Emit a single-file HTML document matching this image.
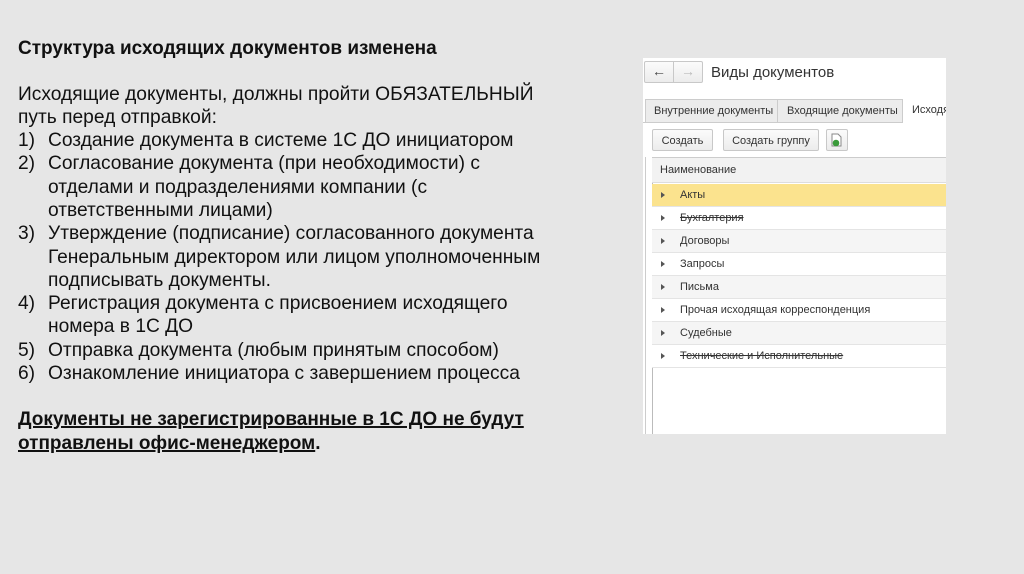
<!DOCTYPE html>
<html><head><meta charset="utf-8"><style>
*{margin:0;padding:0;box-sizing:border-box}
body{width:1024px;height:574px;background:#e6e6e6;position:relative;overflow:hidden;font-family:"Liberation Sans",Arial,sans-serif;color:#111}
.l{position:absolute;font-size:19.2px;white-space:nowrap;line-height:22px}
.n{left:18px}.t{left:48px}
.b{font-weight:bold}
.u{text-decoration:underline;text-decoration-thickness:2px}
#p{position:absolute;left:643px;top:58px;width:303px;height:376px;background:#fff;overflow:hidden;font-size:11px;color:#333}
.a{position:absolute}
.btn{position:absolute;border:1px solid #c8c8c8;background:linear-gradient(#fbfbfb,#ececec);border-radius:2px;font-size:11px;text-align:center;line-height:22px;color:#333}
.row{position:absolute;left:9px;width:300px;height:23px;border-bottom:1px solid #e4e4e4;line-height:22px}
.row i{position:absolute;left:9px;top:8px;width:0;height:0;border-left:4px solid #555;border-top:3px solid transparent;border-bottom:3px solid transparent}
.row span{position:absolute;left:28px}
.s{text-decoration:line-through}
</style></head><body>
<div class="l b" style="left:18px;top:38px;font-size:19px">Структура исходящих документов изменена</div>
<div class="l" style="left:18px;top:84px">Исходящие документы, должны пройти ОБЯЗАТЕЛЬНЫЙ</div>
<div class="l" style="left:18px;top:107px">путь перед отправкой:</div>
<div class="l n" style="top:130px">1)</div><div class="l t" style="top:130px">Создание документа в системе 1С ДО инициатором</div>
<div class="l n" style="top:153px">2)</div><div class="l t" style="top:153px">Согласование документа (при необходимости) с</div>
<div class="l t" style="top:177px">отделами и подразделениями компании (с</div>
<div class="l t" style="top:200px">ответственными лицами)</div>
<div class="l n" style="top:223px">3)</div><div class="l t" style="top:223px">Утверждение (подписание) согласованного документа</div>
<div class="l t" style="top:247px">Генеральным директором или лицом уполномоченным</div>
<div class="l t" style="top:270px">подписывать документы.</div>
<div class="l n" style="top:293px">4)</div><div class="l t" style="top:293px">Регистрация документа с присвоением исходящего</div>
<div class="l t" style="top:316px">номера в 1С ДО</div>
<div class="l n" style="top:340px">5)</div><div class="l t" style="top:340px">Отправка документа (любым принятым способом)</div>
<div class="l n" style="top:363px">6)</div><div class="l t" style="top:363px">Ознакомление инициатора с завершением процесса</div>
<div class="l b" style="left:18px;top:409px;font-size:19px"><span class="u">Документы не зарегистрированные в 1С ДО не будут</span></div>
<div class="l b" style="left:18px;top:433px;font-size:19px"><span class="u">отправлены офис-менеджером</span>.</div>

<div id="p">
 <div class="btn" style="left:1px;top:3px;width:30px;height:22px;border-radius:2px 0 0 2px;font-size:14px;line-height:18px;color:#444">&#8592;</div>
 <div class="btn" style="left:30px;top:3px;width:30px;height:22px;border-radius:0 2px 2px 0;font-size:14px;line-height:18px;color:#bbb">&#8594;</div>
 <div class="a" style="left:68px;top:6px;font-size:15px;color:#333">Виды документов</div>
 <div class="a" style="left:0;top:41px;width:303px;height:24px;border-bottom:1px solid #ccc"></div>
 <div class="a" style="left:2px;top:41px;width:133px;height:24px;background:#ececec;border:1px solid #ccc;line-height:22px;padding-left:8px">Внутренние документы</div>
 <div class="a" style="left:135px;top:41px;width:125px;height:24px;background:#ececec;border:1px solid #ccc;border-left:none;line-height:22px;padding-left:9px">Входящие документы</div>
 <div class="a" style="left:260px;top:41px;width:60px;height:25px;background:#fff;line-height:22px;padding-left:9px">Исходящие</div>
 <div class="btn" style="left:9px;top:71px;width:61px;height:22px">Создать</div>
 <div class="btn" style="left:80px;top:71px;width:96px;height:22px">Создать группу</div>
 <div class="btn" style="left:183px;top:71px;width:22px;height:22px"></div>
 <svg class="a" style="left:188px;top:75px" width="12" height="14" viewBox="0 0 12 14"><path d="M1 1h6l3 3v9H1z" fill="#fff" stroke="#888"/><circle cx="5" cy="10" r="3.3" fill="#3a9a3a"/></svg>
 <div class="a" style="left:2px;top:99px;width:1px;height:277px;background:#ccc"></div>
 <div class="a" style="left:9px;top:99px;width:1px;height:277px;background:#bbb"></div>
 <div class="a" style="left:9px;top:99px;width:300px;height:26px;background:#f2f2f2;border-top:1px solid #ccc;border-bottom:1px solid #ddd;line-height:24px;padding-left:8px">Наименование</div>
 <div class="row" style="top:126px;background:#fbe38e"><i></i><span>Акты</span></div>
 <div class="row" style="top:149px;background:#fff"><i></i><span class="s">Бухгалтерия</span></div>
 <div class="row" style="top:172px;background:#f5f5f5"><i></i><span>Договоры</span></div>
 <div class="row" style="top:195px;background:#fff"><i></i><span>Запросы</span></div>
 <div class="row" style="top:218px;background:#f5f5f5"><i></i><span>Письма</span></div>
 <div class="row" style="top:241px;background:#fff"><i></i><span>Прочая исходящая корреспонденция</span></div>
 <div class="row" style="top:264px;background:#f5f5f5"><i></i><span>Судебные</span></div>
 <div class="row" style="top:287px;background:#fff"><i></i><span class="s">Технические и Исполнительные</span></div>
</div>
</body></html>
